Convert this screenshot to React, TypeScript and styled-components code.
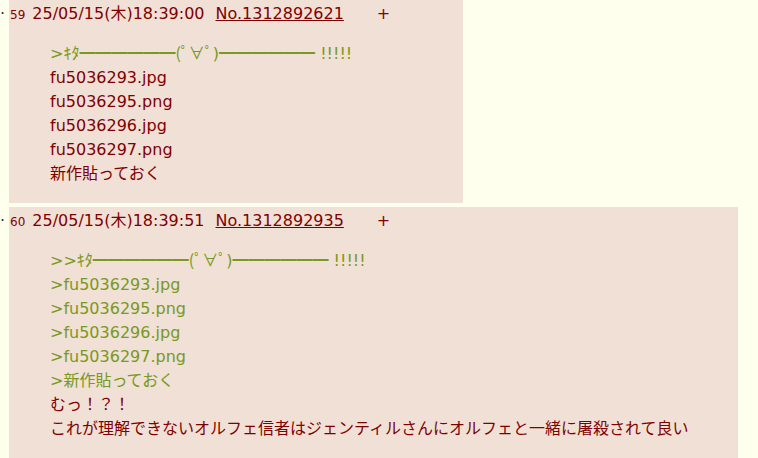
import React from 'react'
import styled, { createGlobalStyle } from 'styled-components'

//Global
const GlobalStyle = createGlobalStyle`
  html, body {
    margin: 0;
    padding: 0;
    background-color: #ffffee;
  }
  body {
    font-family: 'DejaVu Sans', 'Noto Sans CJK JP', sans-serif;
    font-size: 16px;
    color: #800000;
  }
`

//Styled Components
const Thread = styled.div`
  display: flex;
  flex-direction: column;
  gap: 4px;
`

const Row = styled.div`
  display: flex;
  align-items: flex-start;
`

const Leader = styled.div`
  width: 9px;
  padding-top: 2px;
  line-height: 24px;
  color: #333333;
`

const Reply = styled.div<{ $width: number }>`
  width: ${(props) => props.$width}px;
  background-color: #f0e0d6;
  padding: 2px 0 0 1px;
  box-sizing: border-box;
`

const Header = styled.div`
  display: flex;
  align-items: baseline;
  height: 24px;
  line-height: 24px;
`

const Num = styled.span`
  font-size: 12px;
  color: #800000;
`

const Stamp = styled.span`
  margin-left: 7px;
`

const PostNo = styled.a`
  margin-left: 11px;
  color: #800000;
  text-decoration: underline;
  cursor: pointer;
`

const Del = styled.a`
  margin-left: 33px;
  color: #800000;
  text-decoration: none;
  cursor: pointer;
`

const Body = styled.blockquote<{ $bottom: number }>`
  margin: 14px 0 ${(props) => props.$bottom}px 40px;
  padding: 0;
`

const Line = styled.div<{ $quote?: boolean }>`
  line-height: 24px;
  white-space: nowrap;
  color: ${(props) => (props.$quote ? '#789922' : '#800000')};
`

const Rule = styled.span`
  font-family: 'Noto Sans CJK JP', sans-serif;
`

//Data
interface IPost {
  num: number
  stamp: string
  no: string
  width: number
  bottom: number
  lines: { text: string; quote?: boolean; kita?: string }[]
}

const posts: IPost[] = [
  {
    num: 59,
    stamp: '25/05/15(木)18:39:00',
    no: 'No.1312892621',
    width: 454,
    bottom: 17,
    lines: [
      { text: '', quote: true, kita: '>' },
      { text: 'fu5036293.jpg' },
      { text: 'fu5036295.png' },
      { text: 'fu5036296.jpg' },
      { text: 'fu5036297.png' },
      { text: '新作貼っておく' },
    ],
  },
  {
    num: 60,
    stamp: '25/05/15(木)18:39:51',
    no: 'No.1312892935',
    width: 729,
    bottom: 24,
    lines: [
      { text: '', quote: true, kita: '>>' },
      { text: '>fu5036293.jpg', quote: true },
      { text: '>fu5036295.png', quote: true },
      { text: '>fu5036296.jpg', quote: true },
      { text: '>fu5036297.png', quote: true },
      { text: '>新作貼っておく', quote: true },
      { text: 'むっ！？！' },
      { text: 'これが理解できないオルフェ信者はジェンティルさんにオルフェと一緒に屠殺されて良い' },
    ],
  },
]

//React Component
const App: React.FC = () => {
  return (
    <>
      <GlobalStyle />
      <Thread>
        {posts.map((post) => (
          <Row key={post.num}>
            <Leader>·</Leader>
            <Reply $width={post.width}>
              <Header>
                <Num>{post.num}</Num>
                <Stamp>{post.stamp}</Stamp>
                <PostNo>{post.no}</PostNo>
                <Del>+</Del>
              </Header>
              <Body $bottom={post.bottom}>
                {post.lines.map((line, i) =>
                  line.kita !== undefined ? (
                    <Line key={i} $quote>
                      {line.kita}ｷﾀ<Rule>━━━━━━</Rule>(ﾟ∀ﾟ)<Rule>━━━━━━</Rule> !!!!!
                    </Line>
                  ) : (
                    <Line key={i} $quote={line.quote}>
                      {line.text}
                    </Line>
                  )
                )}
              </Body>
            </Reply>
          </Row>
        ))}
      </Thread>
    </>
  )
}
export default App
